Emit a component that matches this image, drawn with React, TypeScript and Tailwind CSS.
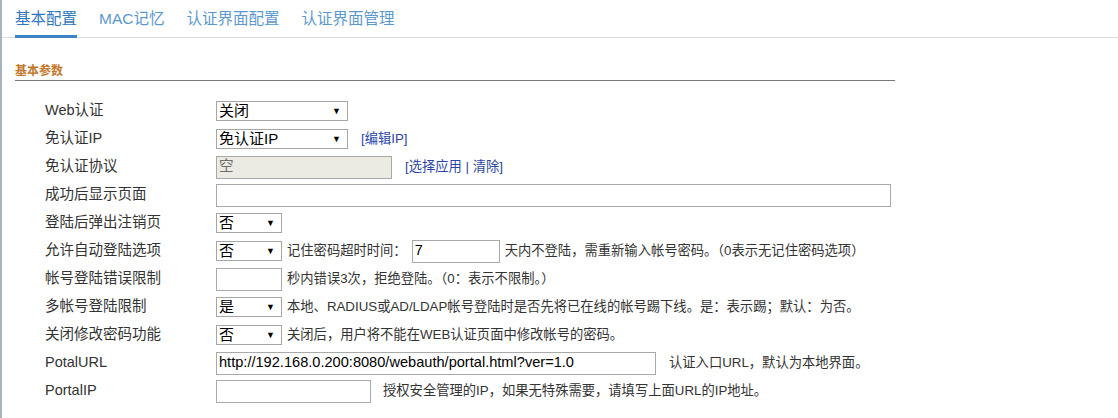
import type { ReactNode } from "react";

const font = { fontFamily: '"Liberation Sans", Arial, "Noto Sans CJK SC", sans-serif' };

function Select({ value, wide }: { value: string; wide?: boolean }) {
  return (
    <div className={`${wide ? "w-[132px]" : "w-[66px]"} h-[20px] border border-[#a6a6a6] bg-white flex items-end justify-between pl-[2px] pr-[6px] shrink-0`}>
      <span className="text-[15px] leading-[18px] text-black">{value}</span>
      <span className="text-[9px] leading-[14px] self-center text-black">▼</span>
    </div>
  );
}

function Input({ w, value, disabled }: { w: string; value?: string; disabled?: boolean }) {
  return (
    <div className={`${w} h-[23px] border border-[#a9a9a9] ${disabled ? "bg-[#ebebe4] text-[#6d6d6d]" : "bg-white text-black"} flex items-center px-[2px] text-[14.6px] shrink-0`}>
      {value}
    </div>
  );
}

function Row({ label, children }: { label: string; children: ReactNode }) {
  return (
    <div className="flex items-center h-[28px]">
      <div className="w-[201px] pl-[30px] text-[14.5px] text-[#333] shrink-0">{label}</div>
      <div className="flex items-center gap-[5px] text-[13.3px] text-[#333]">{children}</div>
    </div>
  );
}

export default function App() {
  const tabs = ["基本配置", "MAC记忆", "认证界面配置", "认证界面管理"];
  return (
    <div className="w-[1118px] h-[418px] bg-white border-l-2 border-[#a8b4c2] overflow-hidden" style={font}>
      <div className="flex gap-[22px] pl-[13px] border-b border-[#dcdcdc] h-[38px]">
        {tabs.map((t, i) => (
          <div
            key={t}
            className={`h-[38px] pt-[7px] text-[15.5px] ${i === 0 ? "text-[#2f78bf] border-b-[3px] border-[#3b83c6]" : "text-[#5a98d2]"}`}
          >
            {t}
          </div>
        ))}
      </div>

      <div className="pl-[13px] pt-[25px] w-[893px]">
        <div className="text-[12px] font-bold text-[#c4782c] pb-[1px] border-b border-[#7a7a7a] leading-[16px]">基本参数</div>
      </div>

      <div className="pl-[13px] pt-[16px]">
        <Row label="Web认证">
          <Select value="关闭" wide />
        </Row>
        <Row label="免认证IP">
          <Select value="免认证IP" wide />
          <span className="ml-[8px] text-[#2a45a8]">[编辑IP]</span>
        </Row>
        <Row label="免认证协议">
          <Input w="w-[176px]" value="空" disabled />
          <span className="ml-[8px] text-[#2a45a8]">[选择应用 | 清除]</span>
        </Row>
        <Row label="成功后显示页面">
          <Input w="w-[675px]" />
        </Row>
        <Row label="登陆后弹出注销页">
          <Select value="否" />
        </Row>
        <Row label="允许自动登陆选项">
          <Select value="否" />
          <span>记住密码超时时间：</span>
          <Input w="w-[88px]" value="7" />
          <span>天内不登陆，需重新输入帐号密码。（0表示无记住密码选项）</span>
        </Row>
        <Row label="帐号登陆错误限制">
          <Input w="w-[66px]" />
          <span>秒内错误3次，拒绝登陆。（0：表示不限制。）</span>
        </Row>
        <Row label="多帐号登陆限制">
          <Select value="是" />
          <span>本地、RADIUS或AD/LDAP帐号登陆时是否先将已在线的帐号踢下线。是：表示踢；默认：为否。</span>
        </Row>
        <Row label="关闭修改密码功能">
          <Select value="否" />
          <span>关闭后，用户将不能在WEB认证页面中修改帐号的密码。</span>
        </Row>
        <Row label="PotalURL">
          <Input w="w-[440px]" value="http://192.168.0.200:8080/webauth/portal.html?ver=1.0" />
          <span className="ml-[8px]">认证入口URL，默认为本地界面。</span>
        </Row>
        <Row label="PortalIP">
          <Input w="w-[155px]" />
          <span className="ml-[7px]">授权安全管理的IP，如果无特殊需要，请填写上面URL的IP地址。</span>
        </Row>
      </div>
    </div>
  );
}
